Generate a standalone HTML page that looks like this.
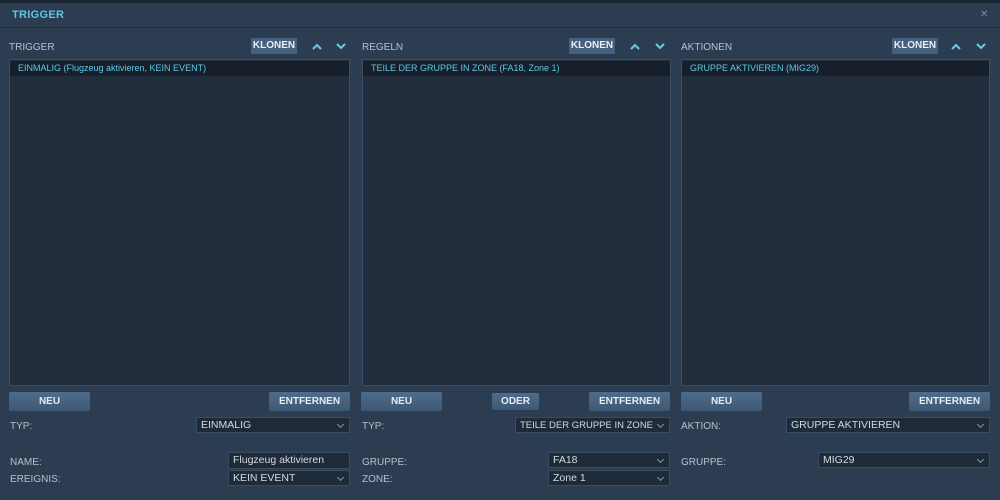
<!DOCTYPE html>
<html><head><meta charset="utf-8"><style>
*{box-sizing:border-box;margin:0;padding:0}
body{width:1000px;height:500px;background:#2c3d51;font-family:"Liberation Sans",sans-serif;position:relative;overflow:hidden;color:#c9d2dc}
.a{position:absolute}
.top{left:0;top:0;width:1000px;height:3px;background:#1b2633}
.title{left:12px;top:9px;font-size:11px;font-weight:bold;color:#5cc6e6;letter-spacing:.3px}
.sep{left:0;top:27px;width:1000px;height:1px;background:#1f2c3a}
.x{left:980px;top:9px;font-size:10px;color:#7b8a9a}
.lbl{font-size:10px;color:#b6c0cb}
.klon{height:16px;background:#44607e;color:#e8eef4;font-size:10px;font-weight:bold;text-align:center;line-height:16px;width:46px}
.list{background:#212d3c;border:1px solid #3b4d62}
.sel{position:absolute;left:0;right:0;top:1px;height:15px;background:#161f2a;color:#5fc8e8;font-size:9px;line-height:15px;padding-left:8px}
.btn{height:19px;background:linear-gradient(#4e6c8c,#3e5873);color:#e6ecf2;font-size:10px;font-weight:bold;text-align:center;line-height:19px;border-radius:2px}
.dd{height:16px;background:#1f2a38;border:1px solid #3a4c61;color:#d2dae3;font-size:10.5px;line-height:15px;padding-left:4px}
.dd.s:after{content:"";position:absolute;right:6px;top:4px;width:4px;height:4px;border-right:1px solid #8796a6;border-bottom:1px solid #8796a6;transform:rotate(45deg)}
</style></head><body>
<div class="a top"></div>
<div class="a title">TRIGGER</div>
<div class="a x">✕</div>
<div class="a sep"></div>

<svg class="a" style="left:0;top:0" width="1000" height="60" fill="none" stroke="#69cbe8" stroke-width="2">
<path d="M313 49l4-4 4 4M337 44l4 4 4-4"/>
<path d="M631 49l4-4 4 4M656 44l4 4 4-4"/>
<path d="M952 49l4-4 4 4M977 44l4 4 4-4"/>
</svg>

<div class="a lbl" style="left:9px;top:42px">TRIGGER</div>
<div class="a klon" style="left:251px;top:38px">KLONEN</div>
<div class="a list" style="left:9px;top:59px;width:341px;height:327px"><div class="sel">EINMALIG (Flugzeug aktivieren, KEIN EVENT)</div></div>
<div class="a btn" style="left:9px;top:392px;width:81px">NEU</div>
<div class="a btn" style="left:269px;top:392px;width:81px">ENTFERNEN</div>
<div class="a lbl" style="left:10px;top:421px">TYP:</div>
<div class="a dd s" style="left:196px;top:417px;width:154px">EINMALIG</div>
<div class="a lbl" style="left:10px;top:457px">NAME:</div>
<div class="a dd" style="left:228px;top:452px;width:122px;height:17px">Flugzeug aktivieren</div>
<div class="a lbl" style="left:10px;top:474px">EREIGNIS:</div>
<div class="a dd s" style="left:228px;top:470px;width:122px">KEIN EVENT</div>

<div class="a lbl" style="left:362px;top:42px">REGELN</div>
<div class="a klon" style="left:569px;top:38px">KLONEN</div>
<div class="a list" style="left:362px;top:59px;width:309px;height:327px"><div class="sel">TEILE DER GRUPPE IN ZONE (FA18, Zone 1)</div></div>
<div class="a btn" style="left:361px;top:392px;width:81px">NEU</div>
<div class="a btn" style="left:492px;top:393px;width:47px;height:17px;line-height:17px">ODER</div>
<div class="a btn" style="left:589px;top:392px;width:81px">ENTFERNEN</div>
<div class="a lbl" style="left:362px;top:421px">TYP:</div>
<div class="a dd s" style="left:515px;top:417px;width:155px;font-size:9.5px">TEILE DER GRUPPE IN ZONE</div>
<div class="a lbl" style="left:362px;top:457px">GRUPPE:</div>
<div class="a dd s" style="left:548px;top:452px;width:122px">FA18</div>
<div class="a lbl" style="left:362px;top:474px">ZONE:</div>
<div class="a dd s" style="left:548px;top:470px;width:122px">Zone 1</div>

<div class="a lbl" style="left:681px;top:42px">AKTIONEN</div>
<div class="a klon" style="left:892px;top:38px">KLONEN</div>
<div class="a list" style="left:681px;top:59px;width:309px;height:327px"><div class="sel">GRUPPE AKTIVIEREN (MIG29)</div></div>
<div class="a btn" style="left:681px;top:392px;width:81px">NEU</div>
<div class="a btn" style="left:909px;top:392px;width:81px">ENTFERNEN</div>
<div class="a lbl" style="left:681px;top:421px">AKTION:</div>
<div class="a dd s" style="left:786px;top:417px;width:204px">GRUPPE AKTIVIEREN</div>
<div class="a lbl" style="left:681px;top:457px">GRUPPE:</div>
<div class="a dd s" style="left:818px;top:452px;width:172px">MIG29</div>
</body></html>
